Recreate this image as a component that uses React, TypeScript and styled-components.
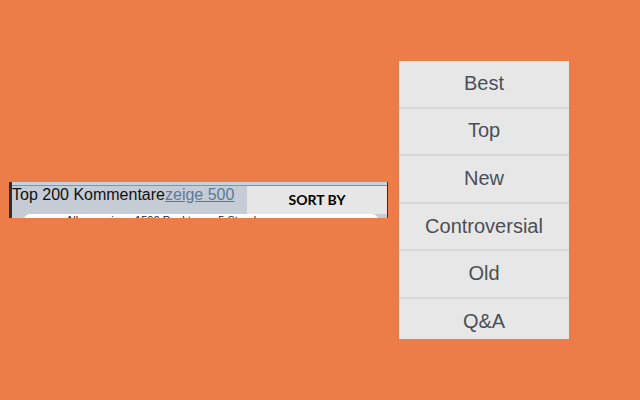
import React from "react"
import styled, { createGlobalStyle } from "styled-components"

const sortOptions = ["Best", "Top", "New", "Controversial", "Old", "Q&A"]

export default function App() {
  return (
    <>
      <GlobalStyle />
      <Page>
        <CommentBar>
          <TopStrip />
          <BarRow>
            <Heading>
              Top 200 Kommentare<ShowMore href="#">zeige 500</ShowMore>
            </Heading>
            <SortLabel>SORT BY</SortLabel>
          </BarRow>
          <CommentCard>
            <CommentMeta>Alle anzeigen 1500 Punkte vor 5 Stunden</CommentMeta>
          </CommentCard>
        </CommentBar>
        <SortMenu>
          {sortOptions.map((option) => (
            <SortItem key={option}>{option}</SortItem>
          ))}
        </SortMenu>
      </Page>
    </>
  )
}

const GlobalStyle = createGlobalStyle`
  html, body {
    margin: 0;
    padding: 0;
    background: #ec7d49;
  }
`

const Page = styled.div`
  box-sizing: border-box;
  width: 640px;
  height: 400px;
  padding-left: 9px;
  display: flex;
  align-items: center;
  gap: 11px;
  overflow: hidden;
  background: #ec7d49;
  font-family: "Liberation Sans", Arial, sans-serif;
`

const CommentBar = styled.div`
  box-sizing: border-box;
  width: 379px;
  height: 36px;
  display: flex;
  flex-direction: column;
  overflow: hidden;
  background: #c6ccd6;
  border-left: 3px solid #2f2f2f;
  border-right: 1px solid #2f2f2f;
`

const TopStrip = styled.div`
  flex: none;
  height: 4px;
  background: #c3d3e0;
  border-bottom: 1px solid #8a929c;
  box-sizing: border-box;
`

const BarRow = styled.div`
  flex: none;
  height: 28px;
  display: flex;
  justify-content: space-between;
`

const Heading = styled.div`
  font-size: 16px;
  line-height: 18px;
  color: #111;
`

const ShowMore = styled.a`
  color: #5b7a99;
  text-decoration: underline;
`

const SortLabel = styled.div`
  box-sizing: border-box;
  width: 140px;
  height: 28px;
  padding-top: 5px;
  background: #e6e6e6;
  color: #000;
  font-family: Lato, sans-serif;
  font-size: 14px;
  font-weight: 700;
  line-height: 18px;
  text-align: center;
`

const CommentCard = styled.div`
  flex: none;
  height: 30px;
  margin: 0 9px 0 12px;
  padding-left: 42px;
  background: #fff;
  border-radius: 6px;
`

const CommentMeta = styled.div`
  font-size: 11px;
  line-height: 13px;
  color: #222;
`

const SortMenu = styled.div`
  width: 170px;
  height: 278px;
  display: flex;
  flex-direction: column;
  overflow: hidden;
  background: #e7e7e7;
`

const SortItem = styled.div`
  box-sizing: border-box;
  flex: none;
  height: 47.6px;
  padding-bottom: 1px;
  display: flex;
  align-items: center;
  justify-content: center;
  font-size: 20px;
  color: #4a4f55;
  border-bottom: 2px solid #d4d8d7;

  &:last-child {
    border-bottom-color: transparent;
  }
`
